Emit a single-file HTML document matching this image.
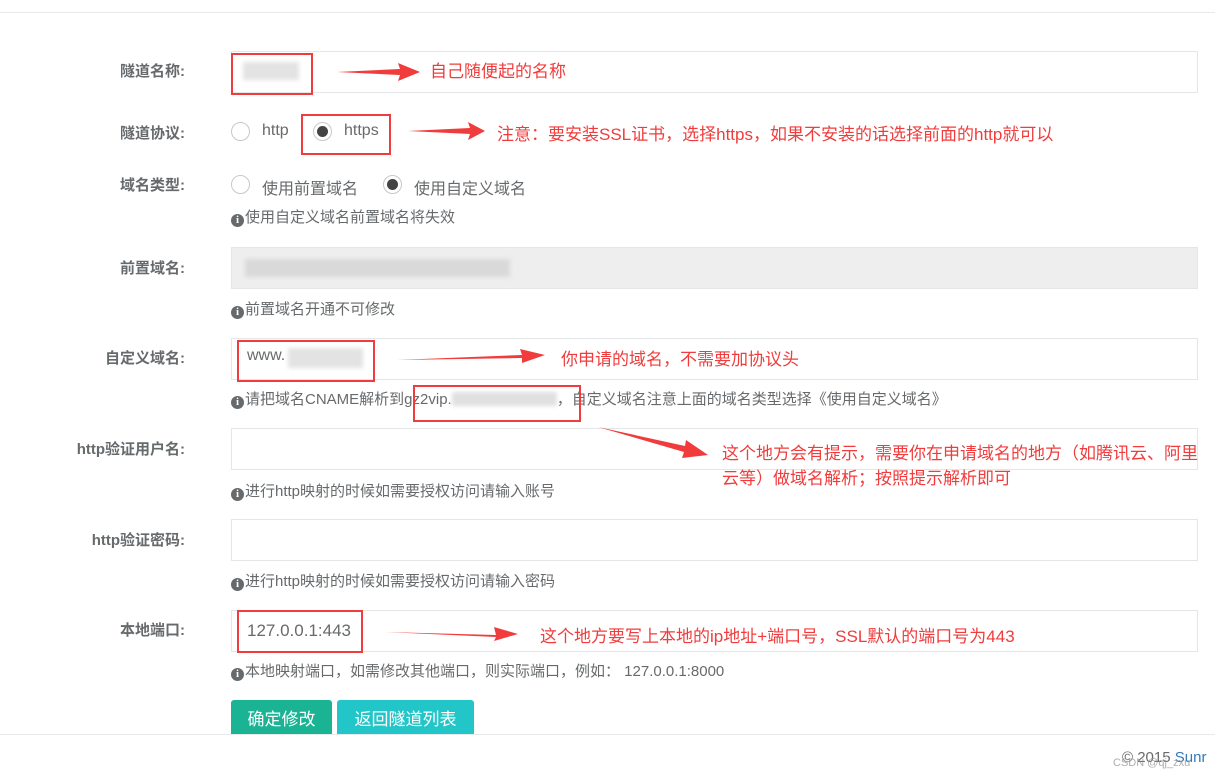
<!DOCTYPE html>
<html><head><meta charset="utf-8">
<style>
*{margin:0;padding:0;box-sizing:border-box}
body{width:1215px;height:779px;background:#fff;position:relative;overflow:hidden;font-family:"Liberation Sans","Noto Sans CJK SC",sans-serif;color:#676a6c;font-size:16px}
.a{position:absolute;white-space:nowrap}
.lbl{position:absolute;right:1030px;font-weight:bold;font-size:15px;color:#676a6c;white-space:nowrap}
.inp{position:absolute;left:231px;width:967px;height:42px;border:1px solid #e5e6e7;background:#fff}
.hint{position:absolute;left:231px;font-size:15px;color:#676a6c;white-space:nowrap}
.hint i{display:inline-block;width:13px;height:13px;border-radius:50%;background:#676a6c;color:#fff;font-style:normal;font-weight:bold;font-size:11px;line-height:13px;text-align:center;font-family:"Liberation Serif",serif;vertical-align:-1px;margin-right:1px}
.radio{position:absolute;width:19px;height:19px;border-radius:50%;border:1px solid #c8c8c8;background:#fff}
.radio.on::after{content:"";position:absolute;left:3px;top:3px;width:11px;height:11px;border-radius:50%;background:#444}
.red{position:absolute;border:2px solid #f03c3c}
.note{position:absolute;color:#f03c3c;font-size:17px;white-space:nowrap}
.blur{position:absolute;background:#e3e3e3;filter:blur(2px)}
</style></head><body>
<div class="a" style="left:0;top:12px;width:1215px;height:1px;background:#e7eaec"></div>

<div class="lbl" style="top:60px">隧道名称:</div>
<div class="inp" style="top:51px"></div>
<div class="blur" style="left:243px;top:62px;width:56px;height:18px"></div>
<div class="red" style="left:231px;top:53px;width:82px;height:42px"></div>
<svg class="a" style="left:330px;top:60px" width="100" height="24"><polygon points="7,12 70,9 68,3 90,12 68,21 70,15" fill="#f03c3c"/></svg>
<div class="note" style="left:430px;top:57px">自己随便起的名称</div>

<div class="lbl" style="top:122px">隧道协议:</div>
<div class="radio" style="left:231px;top:122px"></div>
<div class="a" style="left:262px;top:122px">http</div>
<div class="radio on" style="left:313px;top:122px"></div>
<div class="a" style="left:344px;top:122px">https</div>
<div class="red" style="left:301px;top:114px;width:90px;height:41px"></div>
<svg class="a" style="left:400px;top:119px" width="100" height="24"><polygon points="8,12 70,9 68,3 85,12 68,21 70,15" fill="#f03c3c"/></svg>
<div class="note" style="left:497px;top:120px">注意：要安装SSL证书，选择https，如果不安装的话选择前面的http就可以</div>

<div class="lbl" style="top:174px">域名类型:</div>
<div class="radio" style="left:231px;top:175px"></div>
<div class="a" style="left:262px;top:175px">使用前置域名</div>
<div class="radio on" style="left:383px;top:175px"></div>
<div class="a" style="left:414px;top:175px">使用自定义域名</div>
<div class="hint" style="top:206px"><i>i</i>使用自定义域名前置域名将失效</div>

<div class="lbl" style="top:257px">前置域名:</div>
<div class="inp" style="top:247px;background:#eee"></div>
<div class="blur" style="left:245px;top:259px;width:265px;height:18px;background:#d9d9d9"></div>
<div class="hint" style="top:298px"><i>i</i>前置域名开通不可修改</div>

<div class="lbl" style="top:347px">自定义域名:</div>
<div class="inp" style="top:338px"></div>
<div class="a" style="left:247px;top:347px;font-size:16px">www.</div>
<div class="blur" style="left:288px;top:348px;width:75px;height:20px"></div>
<div class="red" style="left:237px;top:340px;width:138px;height:42px"></div>
<svg class="a" style="left:390px;top:344px" width="160" height="24"><polygon points="7,16 132,11 130,5 155,11 132,19 132,14" fill="#f03c3c"/></svg>
<div class="note" style="left:561px;top:345px">你申请的域名，不需要加协议头</div>
<div class="hint" style="top:388px"><i>i</i>请把域名CNAME解析到gz2vip.<span style="display:inline-block;width:105px;height:14px;background:#e0e0e0;filter:blur(2px);vertical-align:-2px"></span>，自定义域名注意上面的域名类型选择《使用自定义域名》</div>
<div class="red" style="left:413px;top:385px;width:168px;height:37px"></div>

<div class="lbl" style="top:438px">http验证用户名:</div>
<div class="inp" style="top:428px"></div>
<svg class="a" style="left:590px;top:420px" width="130" height="45"><polygon points="8,7 95,26 96,20 118,35 92,38 94,32" fill="#f03c3c"/></svg>
<div class="note" style="left:722px;top:441px;line-height:25px;white-space:normal;width:490px">这个地方会有提示，需要你在申请域名的地方（如腾讯云、阿里云等）做域名解析；按照提示解析即可</div>
<div class="hint" style="top:480px"><i>i</i>进行http映射的时候如需要授权访问请输入账号</div>

<div class="lbl" style="top:529px">http验证密码:</div>
<div class="inp" style="top:519px"></div>
<div class="hint" style="top:570px"><i>i</i>进行http映射的时候如需要授权访问请输入密码</div>

<div class="lbl" style="top:619px">本地端口:</div>
<div class="inp" style="top:610px"></div>
<div class="a" style="left:247px;top:621px;font-size:17px">127.0.0.1:443</div>
<div class="red" style="left:237px;top:610px;width:126px;height:43px"></div>
<svg class="a" style="left:378px;top:622px" width="150" height="24"><polygon points="7,10 118,13 116,5 140,12 116,19 118,15" fill="#f03c3c"/></svg>
<div class="note" style="left:540px;top:622px">这个地方要写上本地的ip地址+端口号，SSL默认的端口号为443</div>
<div class="hint" style="top:660px"><i>i</i>本地映射端口，如需修改其他端口，则实际端口，例如：  127.0.0.1:8000</div>

<div class="a" style="left:231px;top:700px;width:101px;height:34px;background:#1ab394;border-radius:3px 3px 0 0;color:#fff;font-size:17px;text-align:center;line-height:40px">确定修改</div>
<div class="a" style="left:337px;top:700px;width:137px;height:34px;background:#23c6c8;border-radius:3px 3px 0 0;color:#fff;font-size:17px;text-align:center;line-height:40px">返回隧道列表</div>
<div class="a" style="left:0;top:734px;width:1215px;height:1px;background:#e7eaec"></div>
<div class="a" style="left:1122px;top:749px;font-size:15px;color:#676a6c">© 2015 <span style="color:#337ab7">Sunr</span></div>
<div class="a" style="left:1113px;top:757px;font-size:11px;color:#999;opacity:.8">CSDN @qj_zxu</div>
</body></html>
